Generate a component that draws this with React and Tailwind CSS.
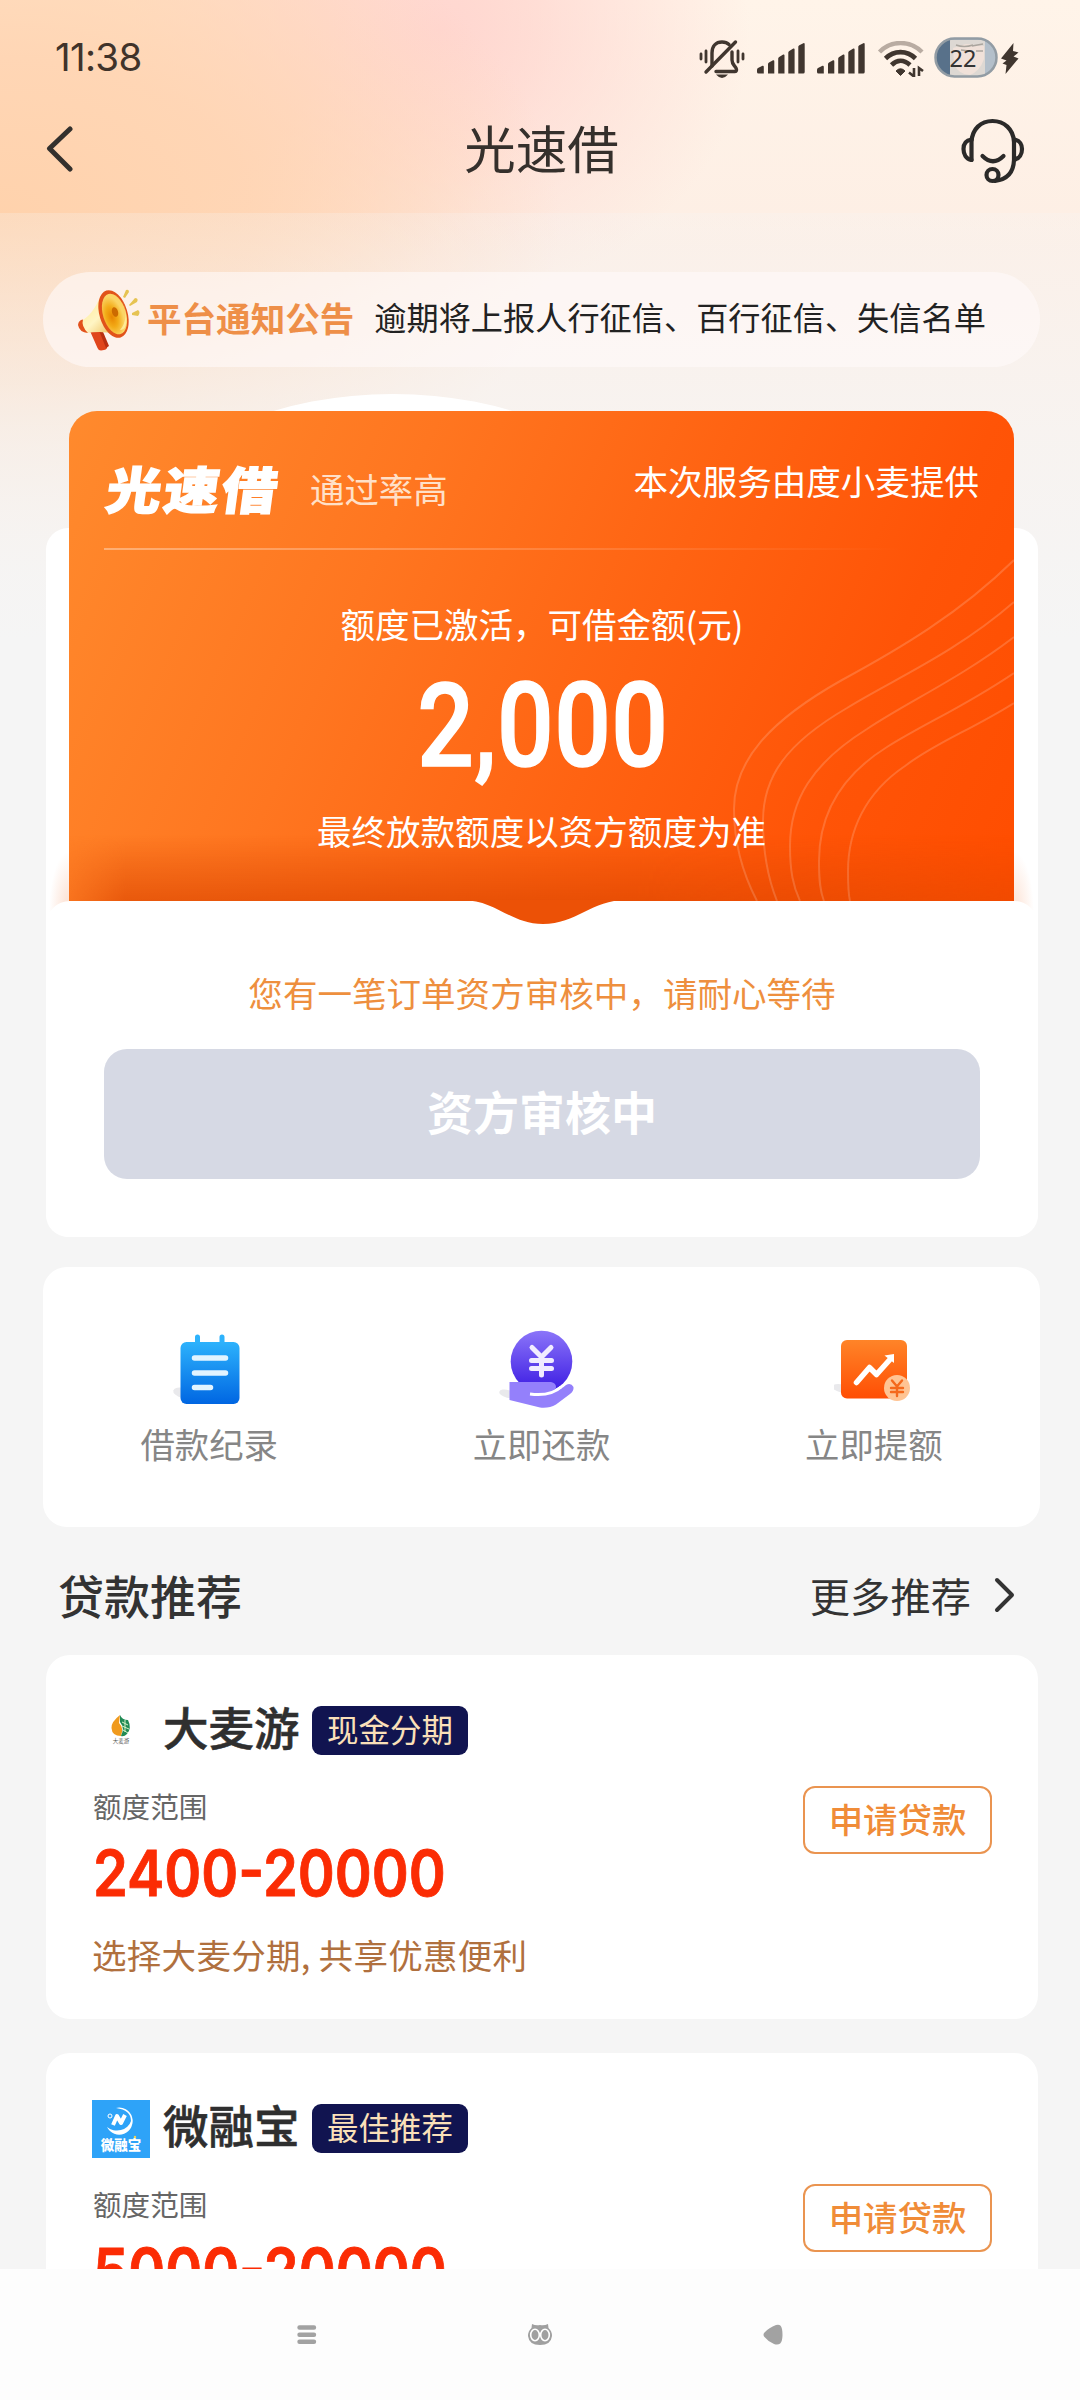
import React from 'react';

const menus = [
  { key: 'records', label: '借款纪录', Icon: RecordIcon },
  { key: 'repay', label: '立即还款', Icon: RepayIcon },
  { key: 'raise', label: '立即提额', Icon: RaiseIcon },
];

const loans = [
  { name: '大麦游', tag: '现金分期', range: '2400-20000', desc: '选择大麦分期, 共享优惠便利', Logo: DamaiLogo },
  { name: '微融宝', tag: '最佳推荐', range: '5000-20000', desc: '', Logo: WeirongLogo },
];

function SignalIcon() {
  return (
    <svg width="48" height="31" viewBox="0 0 48 31" fill="#40362f">
      <path d="M0 26.5 Q0 25.5 1 25 L5.5 22.8 Q6.8 22.4 6.8 24 V30.5 H1.5 Q0 30.5 0 29z" />
      <path d="M11 21 Q11 20 12 19.4 L16 17.3 Q17.3 16.8 17.3 18.4 V30.5 H11z" />
      <path d="M21.2 15.5 Q21.2 14.5 22.2 14 L26.2 11.6 Q27.5 11.2 27.5 12.6 V30.5 H21.2z" />
      <path d="M31.3 9.6 Q31.3 8.6 32.3 8 L36.3 5.6 Q37.6 5.2 37.6 6.6 V30.5 H31.3z" />
      <path d="M41.3 3.8 Q41.3 2.8 42.3 2.2 L46.3 .2 Q47.7 -.2 47.7 1.2 V29 Q47.7 30.5 46.2 30.5 H41.3z" />
    </svg>
  );
}

function StatusBar() {
  return (
    <div className="flex h-[104px] items-start justify-between pl-[55px] pr-[61px] pt-[37px]">
      <span className="font-[Inter] text-[38.5px] leading-[41px] tracking-[-0.7px] text-[#40332a]">11:38</span>
      <div className="flex items-start">
        <svg className="mt-[2px]" width="46" height="40" viewBox="0 0 46 40" fill="none" stroke="#40362f" strokeWidth="3.4" strokeLinecap="round">
          <path d="M13 27 V14 C13 7 17 3 23 3 C26 3 28.500 4 30 5.500" />
          <path d="M33 13 V21 C33 25 35 26 37 29 C38 31 37.500 32.500 36 32.500 H17" />
          <path d="M36.500 3 L7 33" />
          <path d="M2 15 V20 M7 12 V23 M39 12 V23 M44 15 V20" strokeWidth="2.800" />
          <path d="M17 35.500 H29 Q26 39 23 39 Q20 39 17 35.500z" fill="#40362f" stroke="none" />
        </svg>
        <span className="ml-[12px] mt-[6px]"><SignalIcon /></span>
        <span className="ml-[12px] mt-[6px]"><SignalIcon /></span>
        <svg className="ml-[12px] mt-[4px]" width="48" height="36" viewBox="0 0 48 36" fill="none" stroke="#40362f" strokeWidth="4.600">
          <path d="M2.500 11 C14 -1 33 -1 45 11" stroke="#b9aca2" strokeWidth="4.400" />
          <path d="M8.500 17.500 C17 9 30 9 38.500 17.500" />
          <path d="M14.500 24 C20 18.500 27 18.500 33 24" />
          <path d="M19 30 Q23.500 25.500 28 30 L23.500 34.500z" fill="#40362f" stroke="#40362f" strokeWidth="1" />
          <path d="M37 27 V35.500 L32 31.500 M42 35 V27 L46 30" strokeWidth="2.600" />
        </svg>
        <svg className="ml-[9px]" width="65" height="42" viewBox="0 0 65 42">
          <defs>
            <clipPath id="battery"><rect x="2" y="2" width="60" height="37" rx="18" /></clipPath>
          </defs>
          <rect x="1.500" y="1.500" width="61" height="38" rx="19" fill="#b3bfca" />
          <g clipPath="url(#battery)">
            <rect x="0" y="0" width="16" height="42" fill="#58718a" />
            <rect x="16" y="3" width="35" height="36" fill="#ddd8d3" />
            <path d="M19 11 L32 7 L50 9 V22 Q46 34 36 38 Q25 38 20 27z" fill="#f0e1d9" />
            <path d="M22 8 Q30 11 39 8 M38 9 L49 7 M27 13 L35 14 M42 14 H49" stroke="#aaa59e" strokeWidth="1.500" fill="none" />
          </g>
          <rect x="1.500" y="1.500" width="61" height="38" rx="19" fill="none" stroke="#929ca4" strokeWidth="2.500" />
          <text x="29" y="29.500" textAnchor="middle" fontSize="23.500" fontFamily="Noto Sans" fill="#333">22</text>
        </svg>
        <svg className="ml-[2px] mt-[6px]" width="18" height="31" viewBox="0 0 18 31" fill="#40362f">
          <path d="M12.500 0 L0 15.500 L5.500 17.500 L1.500 20.500 L5.500 22 L4.500 31 L17.500 15.500 L12.500 13.500 L17.500 9.500 L12 8z" />
        </svg>
      </div>
    </div>
  );
}

function Header() {
  return (
    <div className="flex h-[109px] items-start justify-between pl-[46px] pr-[55px]">
      <svg className="mt-[22px]" width="62" height="46" viewBox="0 0 62 46" fill="none" stroke="#33302d" strokeWidth="5" strokeLinecap="round" strokeLinejoin="round">
        <path d="M24 3 L3.500 22.500 L24 43" />
      </svg>
      <h1 className="mt-[5px] pl-[14px] text-[51.5px] leading-[75px] text-[#35302c]">光速借</h1>
      <svg className="mt-[14px]" width="64" height="67" viewBox="0 0 64 67" fill="none" stroke="#2b2a29" strokeWidth="4.200" strokeLinecap="round">
        <path d="M10.500 42 V24 C11 11 20 3 31.500 3 C43 3 52.500 11 53 24 V42 C52.500 55 46 61.500 34 63" />
        <path d="M10.500 21.500 C4 22.500 2.500 27 2.500 31 C2.500 36 5 41 10.500 42" />
        <path d="M53.500 21.500 C59 22.500 61 27 61 31 C61 36 58.500 40.500 53.500 41.500" />
        <path d="M21.500 38 Q32 48.500 42.500 38" />
        <circle cx="31.500" cy="57" r="6" />
      </svg>
    </div>
  );
}

function Megaphone() {
  return (
    <svg width="62" height="64" viewBox="0 0 62 64">
      <defs>
        <linearGradient id="cone" x1="0" y1="0" x2="1" y2="1">
          <stop offset="0" stopColor="#ffe98e" />
          <stop offset=".5" stopColor="#fff5c4" />
          <stop offset="1" stopColor="#e8ac37" />
        </linearGradient>
        <radialGradient id="bell" cx=".35" cy=".55">
          <stop offset="0" stopColor="#e88500" />
          <stop offset=".5" stopColor="#f3ac18" />
          <stop offset="1" stopColor="#fbd566" />
        </radialGradient>
      </defs>
      <path d="M12 43 L20 39 L29 58 Q30 61 26 62 L23 62.500 Q20.500 62.500 19.500 60z" fill="#e0451b" />
      <path d="M20 40 L23 39 L31 58 L28 60z" fill="#b92f10" />
      <path d="M3 33 Q15 27 23 7 L43 47 Q26 42 8 45 Q1 42 3 33z" fill="url(#cone)" />
      <path d="M0 37 Q.500 32 5 31.500 Q3 38 10 45 Q1.500 44.500 0 37z" fill="#e2511c" />
      <ellipse cx="35.500" cy="26" rx="14" ry="24.500" transform="rotate(-17 35.500 26)" fill="#e1531a" />
      <ellipse cx="36.500" cy="26" rx="11.500" ry="21" transform="rotate(-17 36.500 26)" fill="url(#bell)" />
      <path d="M44 12 Q52 30 42 42 Q50 42 48 27 Q47 18 44 12z" fill="#fff0a5" opacity=".8" />
      <ellipse cx="37" cy="24" rx="3" ry="5" transform="rotate(-17 37 24)" fill="#cc6a00" />
      <path d="M45 9 L48 2 Q51 1 51 4 L47 10z M51 17 L57 10 Q61 10 59 14 L52 18z M54 25 L60 22 Q63 24 60 28 L54 27z" fill="#e6c352" />
    </svg>
  );
}

function Notice() {
  return (
    <div className="ml-[43px] mr-[40px] mt-[59px] flex h-[95px] shrink-0 items-center rounded-full bg-[#fffafa]/60 pl-[35px]">
      <Megaphone />
      <span className="mb-[6px] ml-[7px] text-[34.56px] font-bold leading-[40px] text-[#ee8f48]">平台通知公告</span>
      <span className="mb-[7px] ml-[20px] whitespace-nowrap text-[32.2px] leading-[40px] text-[#222]">逾期将上报人行征信、百行征信、失信名单</span>
    </div>
  );
}

function QuotaCard() {
  return (
    <section className="relative ml-[46px] mr-[42px] mt-[44px] h-[826px] shrink-0">
      {/* white backing behind the orange card */}
      <div className="absolute left-[135px] top-[-17px] h-[197px] w-[424px] rounded-[50%] bg-white" />
      <div className="absolute inset-x-0 bottom-0 top-[117px] rounded-[22px] bg-white" />
      <div className="absolute left-[3px] top-[440px] h-[80px] w-[20px] bg-[radial-gradient(ellipse_at_100%_75%,rgba(240,90,10,0.2),transparent_70%)]" />
      <div className="absolute right-[4px] top-[440px] h-[80px] w-[20px] bg-[radial-gradient(ellipse_at_0%_75%,rgba(240,90,10,0.18),transparent_70%)]" />

      <div className="relative ml-[23px] mr-[24px] flex h-[490px] flex-col overflow-hidden rounded-t-[28px] bg-[linear-gradient(114deg,#ff8a2d_0%,#ff7620_32%,#ff6312_58%,#ff5407_80%,#ff4d00_100%)] px-[35px] text-white">
        <div className="absolute inset-x-0 bottom-0 h-[66px] bg-linear-to-t from-[#dc4600]/65 to-transparent [mask-image:linear-gradient(90deg,rgba(0,0,0,0.3),#000_6%,#000_60%,rgba(0,0,0,0.6))]" />
        <svg className="absolute left-0 top-0" width="945" height="490" viewBox="0 0 945 490" fill="none" stroke="#fff" strokeOpacity=".17" strokeWidth="2">
          <path d="M945 149 C890 203 830 238 773 269 C700 310 665 350 665 398 C665 435 675 465 688 490" />
          <path d="M945 191 C885 243 825 268 778 297 C718 332 694 365 694 410 C694 440 698 465 708 490" />
          <path d="M945 226 C890 268 840 290 798 318 C742 353 721 390 721 435 C721 460 724 475 731 490" />
          <path d="M945 262 C893 297 858 311 818 336 C770 366 750 405 750 450 C750 470 751 480 755 490" />
          <path d="M945 292 C900 320 866 332 836 355 C796 382 779 420 779 460 C779 475 779 482 781 490" />
        </svg>
        <div className="relative flex h-[137px] items-start justify-between">
          <div className="flex items-start">
            <span className="mt-[43px] w-[176px] origin-left -skew-x-[7deg] scale-x-[1.1] whitespace-nowrap pl-[3px] text-[50px] font-black leading-[66px] tracking-[2.5px] [-webkit-text-stroke:1.5px_#fff]">光速借</span>
            <span className="ml-[30px] mt-[55px] text-[34.4px] leading-[44px] text-[#ffe0c8]">通过率高</span>
          </div>
          <span className="mt-[47px] text-[34.56px] leading-[44px]">本次服务由度小麦提供</span>
        </div>
        <div className="h-[2px] w-[800px] shrink-0 bg-linear-to-r from-white/35 to-transparent" />
        <div className="relative flex flex-col items-center">
          <p className="mt-[51px] pl-[1px] text-[34.5px] leading-[44px]">额度已激活，可借金额(元)</p>
          <p className="mt-[23px] scale-x-[.86] pl-[4px] font-[Roboto] text-[116px] font-medium leading-[116px] tracking-[0.5px] [-webkit-text-stroke:1.5px_#fff]">2,000</p>
          <p className="mt-[24px] text-[34.56px] leading-[44px]">最终放款额度以资方额度为准</p>
        </div>
      </div>

      <div className="relative flex h-[336px] flex-col items-center rounded-[24px] bg-white">
        <svg className="absolute left-[416px] top-[-1px]" width="164" height="25" viewBox="0 0 164 25">
          <path d="M0 0 C34 0 48 24 81 24 C114 24 130 0 164 0z" fill="#ec5106" />
        </svg>
        <p className="mt-[69px] text-[34.56px] leading-[44px] text-[#ee8f3e]">您有一笔订单资方审核中，请耐心等待</p>
        <button className="mt-[35px] h-[130px] w-[876px] rounded-[23px] bg-[#d6d9e4] pb-[8px] text-[46px] font-bold text-white">资方审核中</button>
      </div>
    </section>
  );
}

function RecordIcon() {
  return (
    <svg className="translate-x-px" width="86" height="86" viewBox="0 0 86 86">
      <defs>
        <linearGradient id="record" x1="0" y1="0" x2="0" y2="1">
          <stop offset="0" stopColor="#2db2fc" />
          <stop offset="1" stopColor="#0066e2" />
        </linearGradient>
      </defs>
      <ellipse cx="16" cy="64" rx="10" ry="5" fill="#e9e9ec" transform="rotate(15 16 64)" />
      <path d="M30.500 8 V20 M55 8 V20" stroke="#2db2fc" strokeWidth="5" strokeLinecap="round" />
      <rect x="13.500" y="13" width="59" height="62" rx="6" fill="url(#record)" />
      <path d="M27.500 29 H58.500 M27.500 44 H58.500 M27.500 58.500 H43.500" stroke="#e2f4ff" strokeWidth="5.500" strokeLinecap="round" />
    </svg>
  );
}

function RepayIcon() {
  return (
    <svg className="translate-x-px" width="86" height="86" viewBox="0 0 86 86">
      <defs>
        <linearGradient id="repay" x1="0" y1="0" x2="0" y2="1">
          <stop offset="0" stopColor="#8b75f9" />
          <stop offset="1" stopColor="#3b1ae2" />
        </linearGradient>
      </defs>
      <ellipse cx="9" cy="65" rx="9" ry="4" fill="#e9e9ec" transform="rotate(15 9 65)" />
      <circle cx="42.500" cy="32.500" r="30.800" fill="url(#repay)" />
      <path d="M33 18.500 L42.500 28 L52 18.500 M42.500 28 V46 M32.500 31.500 H52.500 M32.500 39.500 H52.500" fill="none" stroke="#f1ecff" strokeWidth="5" strokeLinecap="round" strokeLinejoin="round" />
      <path d="M10.500 53 H52 Q57 54 57 58 Q57 61 53 63 Q62 61 67 56 Q72 53.500 74.500 58 Q75 62 71 65 L57 75.500 Q50 79.500 41 78.500 L10.500 71z" fill="#9480fb" />
      <path d="M31 65 Q52 67.500 62 58" fill="none" stroke="#fff" strokeWidth="3" />
    </svg>
  );
}

function RaiseIcon() {
  return (
    <svg className="translate-x-[3px]" width="86" height="86" viewBox="0 0 86 86">
      <defs>
        <linearGradient id="raise" x1="0" y1="0" x2="0" y2="1">
          <stop offset="0" stopColor="#ff8428" />
          <stop offset="1" stopColor="#ff4e04" />
        </linearGradient>
      </defs>
      <ellipse cx="8" cy="59.500" rx="10" ry="4" fill="#e9e9ec" transform="rotate(12 8 59.500)" />
      <rect x="7" y="11" width="66" height="58.500" rx="6" fill="url(#raise)" />
      <path d="M22.500 53.500 L35.500 38.500 L42.500 45.500 L55.500 31" fill="none" stroke="#fff" strokeWidth="5.500" strokeLinecap="round" strokeLinejoin="round" />
      <path d="M50.500 26.500 L60 25 V34z" fill="#fff" />
      <circle cx="63" cy="59" r="13" fill="#ffc493" />
      <path d="M58 51.500 L63 57.500 L68 51.500 M63 57.500 V67 M57 59 H69 M57 63 H69" fill="none" stroke="#f4691c" strokeWidth="2.400" strokeLinecap="round" />
    </svg>
  );
}

function QuickMenu() {
  return (
    <section className="ml-[43px] mr-[40px] mt-[30px] grid h-[260px] shrink-0 grid-cols-3 rounded-[24px] bg-white">
      {menus.map(({ key, label, Icon }) => (
        <div key={key} className="flex flex-col items-center pt-[62px]">
          <Icon />
          <span className="mt-[6px] text-[34.4px] leading-[44px] text-[#868686]">{label}</span>
        </div>
      ))}
    </section>
  );
}

function DamaiLogo() {
  return (
    <svg width="58" height="58" viewBox="0 0 58 58">
      <path d="M28 13 Q19 20 19.500 26 Q20 34 29 34 Q32 26 27 21z" fill="#f09a1d" />
      <path d="M28 13 Q30 18 36 18 Q40 26 35 32 Q32 35 29 34 Q33 26 28 20z" fill="#218a55" />
      <path d="M30 20 L36 23 M30 24 L37 27 M31 28 L36 31 M33 18 V30" stroke="#d4f1c6" strokeWidth="1" />
      <text x="29" y="41" textAnchor="middle" fontSize="5.500" fill="#555">大麦游</text>
    </svg>
  );
}

function WeirongLogo() {
  return (
    <svg width="58" height="58" viewBox="0 0 58 58">
      <rect width="58" height="58" fill="#2ea3f8" />
      <path d="M24 8 A13.500 13.500 0 1 1 15 27 A14.500 13 0 0 0 39 21 Q39 10 24 8z" fill="#fff" />
      <path d="M21 25 L25 16 L29 23 L33 15" fill="none" stroke="#fff" strokeWidth="4" strokeLinejoin="round" />
      <circle cx="18" cy="16" r="2" fill="none" stroke="#fff" />
      <text x="29" y="49.500" textAnchor="middle" fontSize="13.500" fontWeight="900" fill="#fff">微融宝</text>
      <circle cx="43" cy="37" r="1.200" fill="#f5d34d" />
    </svg>
  );
}

function LoanCard({ name, tag, range, desc, Logo }) {
  return (
    <article className="ml-[46px] mr-[42px] flex h-[364px] shrink-0 items-start justify-between rounded-[24px] bg-white px-[46px] pt-[47px]">
      <div className="flex flex-col">
        <div className="flex h-[58px] items-center">
          <Logo />
          <h3 className="mb-[10px] ml-[13px] w-[138px] whitespace-nowrap text-[45.5px] font-medium leading-[58px] text-[#2f2f2f] [-webkit-text-stroke:0.6px_#2f2f2f]">{name}</h3>
          <span className="mb-[2px] ml-[11px] flex h-[49px] w-[156px] items-center justify-center rounded-[9px] bg-[#111450] pb-[4px] text-[31.5px] leading-[45px] text-[#fbe0b9]">
            {tag}
          </span>
        </div>
        <span className="mt-[26px] pl-px text-[28.6px] leading-[40px] text-[#666]">额度范围</span>
        <span className="mt-[15px] origin-left scale-x-[.89] self-start pl-px font-[Inter] text-[63px] font-semibold leading-[64px] text-[#fb2c04] [-webkit-text-stroke:0.8px_#fb2c04]">{range}</span>
        {desc && <span className="mt-[27px] text-[34.56px] leading-[44px] tracking-[0.25px] text-[#b0703e]">{desc}</span>}
      </div>
      <button className="mt-[84px] h-[68px] w-[189px] rounded-[12px] border-2 border-[#ea9450] pb-[2px] text-[34.4px] font-medium text-[#f08c38]">
        申请贷款
      </button>
    </article>
  );
}

function NavBar() {
  return (
    <nav className="relative mt-auto flex h-[131px] shrink-0 items-start justify-between bg-[#fdfdfd] pl-[297px] pr-[297px] pt-[54px]">
      <svg width="20" height="24" viewBox="0 0 20 24" stroke="#a2a2a2" strokeWidth="4.400" strokeLinecap="round">
        <path d="M2.500 4.500 H17 M2.500 11.800 H17 M2.500 18.800 H17" />
      </svg>
      <svg width="24" height="24" viewBox="0 0 24 24">
        <path d="M4 1 Q8 3 12 2 Q16 3 20 1 L20.500 5 Q24 8 24 13 Q23 22 12 22 Q1 22 0 13 Q0 8 3.500 5z" fill="#a0a0a0" />
        <g fill="none" stroke="#fff" strokeWidth="1.600">
          <ellipse cx="7" cy="12" rx="4.300" ry="5.700" />
          <ellipse cx="17" cy="12" rx="4.300" ry="5.700" />
        </g>
      </svg>
      <svg width="20" height="24" viewBox="0 0 20 24">
        <path d="M13 2 Q18 .500 19 6 Q20 12 19 17 Q17.500 23 11 21 Q5 18.500 1.500 14 Q-.500 11.500 1.500 9.500 Q6 4.500 13 2z" fill="#a2a2a2" />
      </svg>
    </nav>
  );
}

export default function App() {
  return (
    <div className="relative h-[2400px] w-[1080px] overflow-hidden bg-[#f5f5f5] font-['Noto_Sans_CJK_SC',sans-serif]">
      <div className="absolute inset-x-0 top-0 h-[640px] bg-linear-to-b from-[#fff4e9] to-[#fdeee4] to-40%" />
      <div className="absolute inset-x-0 top-0 h-[640px] bg-[radial-gradient(ellipse_560px_360px_at_0px_220px,#ffd2ac_0%,rgba(255,212,178,0.85)_45%,rgba(255,225,205,0)_100%),radial-gradient(ellipse_310px_270px_at_440px_30px,#ffd6d0_0%,rgba(255,216,209,0.75)_35%,rgba(255,225,218,0)_100%),radial-gradient(ellipse_560px_400px_at_0px_0px,#ffe2c6_0%,#ffe0c6_60%,rgba(255,232,215,0)_100%)]" />
      <div className="absolute inset-x-0 top-[213px] h-[427px] bg-linear-to-b from-[#f5f5f5]/25 via-[#f5f5f5]/70 to-[#f5f5f5]" />

      <div className="relative flex h-full flex-col">
        <StatusBar />
        <Header />
        <Notice />
        <QuotaCard />
        <QuickMenu />

        <div className="flex h-[128px] shrink-0 items-center justify-between pl-[58px] pr-[64px] pt-[5px]">
          <h2 className="text-[46px] font-medium leading-[60px] text-[#333]">贷款推荐</h2>
          <div className="flex items-center">
            <span className="pt-[3px] text-[40.3px] leading-[60px] text-[#333]">更多推荐</span>
            <svg className="ml-[23px] mt-[3px]" width="22" height="36" viewBox="0 0 22 36" fill="none" stroke="#333" strokeWidth="4" strokeLinecap="round" strokeLinejoin="round">
              <path d="M3 3 L18 18 L3 33" />
            </svg>
          </div>
        </div>

        <div className="flex h-[614px] shrink-0 flex-col gap-[34px] overflow-hidden">
          {loans.map((loan) => (
            <LoanCard key={loan.name} {...loan} />
          ))}
        </div>
        <NavBar />
      </div>
    </div>
  );
}
